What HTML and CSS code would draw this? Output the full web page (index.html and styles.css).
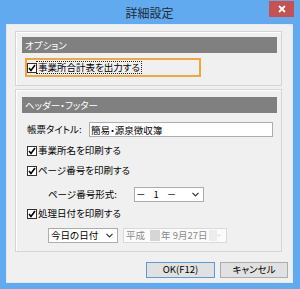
FILE: index.html
```html
<!DOCTYPE html>
<html lang="ja">

<head>
  <meta charset="utf-8">
  <title>詳細設定</title>
  <link rel="stylesheet" href="styles.css">
</head>

<body>
  <div class="window">
    <header class="titlebar">
      <span></span>
      <h1>詳細設定</h1>
      <button class="close" aria-label="閉じる">
        <svg width="8" height="8" viewBox="0 0 8 8"><path d="M1 1L7 7M7 1L1 7" stroke="#fff" stroke-width="1.8"/></svg>
      </button>
    </header>

    <main class="client">
      <section class="group group-options">
        <h2>オプション</h2>
        <div class="body">
          <label class="check focus-ring">
            <span class="box"><svg width="8" height="8" viewBox="0 0 8 8"><path d="M1 4L3 6.5L7 1" fill="none" stroke="#000" stroke-width="1.6"/></svg></span>
            <span class="text dotted">事業所合計表を出力する</span>
          </label>
        </div>
      </section>

      <section class="group group-header">
        <h2>ヘッダー・フッター</h2>
        <div class="body">
          <div class="row title-row">
            <label for="title">帳票タイトル:</label>
            <input id="title" type="text" value="簡易・源泉徴収簿">
          </div>
          <label class="check row-check">
            <span class="box"><svg width="8" height="8" viewBox="0 0 8 8"><path d="M1 4L3 6.5L7 1" fill="none" stroke="#000" stroke-width="1.6"/></svg></span>
            <span class="text">事業所名を印刷する</span>
          </label>
          <label class="check row-check">
            <span class="box"><svg width="8" height="8" viewBox="0 0 8 8"><path d="M1 4L3 6.5L7 1" fill="none" stroke="#000" stroke-width="1.6"/></svg></span>
            <span class="text">ページ番号を印刷する</span>
          </label>
          <div class="row indent page-row">
            <span class="page-label">ページ番号形式:</span>
            <div class="select page-select">
              <span class="value page-value"><span>－</span><span>1</span><span>－</span></span>
              <svg class="chev" width="7" height="5" viewBox="0 0 7 5"><path d="M0.5 0.8L3.5 3.8L6.5 0.8" fill="none" stroke="#333" stroke-width="1.2"/></svg>
            </div>
          </div>
          <label class="check row-check date-check">
            <span class="box"><svg width="8" height="8" viewBox="0 0 8 8"><path d="M1 4L3 6.5L7 1" fill="none" stroke="#000" stroke-width="1.6"/></svg></span>
            <span class="text">処理日付を印刷する</span>
          </label>
          <div class="row indent date-row">
            <div class="select day-select">
              <span class="value">今日の日付</span>
              <svg class="chev" width="7" height="5" viewBox="0 0 7 5"><path d="M0.5 0.8L3.5 3.8L6.5 0.8" fill="none" stroke="#333" stroke-width="1.2"/></svg>
            </div>
            <div class="select date-select disabled">
              <span class="value"><span>平成</span><span class="blank"></span><span>年 9月27日</span><span class="blank wide"></span></span>
              <svg class="chev" width="7" height="5" viewBox="0 0 7 5"><path d="M0.5 0.8L3.5 3.8L6.5 0.8" fill="none" stroke="#bbb" stroke-width="1.2"/></svg>
            </div>
          </div>
        </div>
      </section>

      <div class="actions">
        <button class="btn default">OK(F12)</button>
        <button class="btn">キャンセル</button>
      </div>
    </main>
  </div>
</body>

</html>
```

FILE: styles.css
```css
body {
  margin: 0;
  background: #62aaf0;
  font: 9.5px/1 "Noto Sans CJK JP", "Noto Sans", sans-serif;
  font-feature-settings: "palt";
  color: #000;
}

.window {
  width: 300px;
  height: 289px;
  box-sizing: border-box;
  padding: 0 7px 6px 6px;
  display: flex;
  flex-direction: column;
}

.titlebar {
  height: 24px;
  flex: none;
  display: grid;
  grid-template-columns: 1fr auto 1fr;
}

.titlebar h1 {
  margin: 0;
  font-size: 12px;
  font-weight: normal;
  line-height: 25px;
  color: #1f2a35;
}

.close {
  justify-self: end;
  margin: 1px -1px 0 0;
  width: 25px;
  height: 16px;
  padding: 0;
  border: 0;
  background: #c75050;
  display: grid;
  place-items: center;
}

.client {
  flex: 1;
  background: #f0f0f0;
  border: 1px solid #e2ebf4;
  padding: 6px 4px 4px 8px;
  display: flex;
  flex-direction: column;
}

.group {
  margin-right: 6px;
  border: 1px solid #d5d5d5;
  box-shadow: inset 1px 1px 0 #fff;
  padding: 5px 4px 8px 6px;
}

.group-header {
  margin-top: 3px;
  padding-top: 7px;
}

.group h2 {
  margin: 0;
  height: 16px;
  background: #808080;
  color: #fff;
  font-size: 9.5px;
  font-weight: normal;
  line-height: 16px;
  padding-left: 3px;
}

.group .body {
  display: flex;
  flex-direction: column;
  align-items: flex-start;
  padding-left: 5px;
}

.group-options .body {
  padding-left: 3px;
  margin-top: 5px;
}

.check {
  display: flex;
  align-items: center;
  gap: 1px;
  height: 14px;
}

.box {
  width: 10px;
  height: 10px;
  box-sizing: border-box;
  border: 1px solid #333;
  background: #fff;
  display: grid;
  place-items: center;
}

.focus-ring {
  box-sizing: border-box;
  width: 176px;
  height: 19px;
  border: 2px solid #f2a640;
}

.dotted {
  outline: 1px dotted #222;
  outline-offset: 1px;
}

.row {
  display: flex;
  align-items: center;
}

.title-row {
  margin-top: 9px;
}

.title-row label {
  width: 62px;
}

.title-row input {
  box-sizing: border-box;
  margin: 0;
  width: 184px;
  height: 15px;
  padding: 0 1px;
  border: 1px solid #abadb3;
  background: #fff;
  font: inherit;
}

.row-check {
  margin-top: 7px;
}

.row-check + .row-check {
  margin-top: 6px;
}

.indent {
  padding-left: 21px;
}

.page-row {
  margin-top: 9px;
}

.date-check {
  margin-top: 5px;
}

.date-row {
  margin-top: 7px;
  gap: 5px;
}

.page-label {
  width: 86px;
}

.select {
  box-sizing: border-box;
  height: 15px;
  border: 1px solid #acacac;
  background: #fff;
  display: flex;
  align-items: center;
  justify-content: space-between;
  padding: 0 4px 0 2px;
  white-space: nowrap;
}

.page-select {
  width: 70px;
  padding-left: 1px;
}

.page-value {
  display: flex;
  gap: 8px;
}

.day-select {
  width: 70px;
}

.date-select {
  width: 104px;
  padding-right: 5px;
}

.disabled {
  border-color: #d9d9d9;
  background: #fbfbfb;
  color: #8a8a8a;
}

.disabled .value {
  display: flex;
  align-items: center;
}

.blank {
  flex: none;
  width: 10px;
  height: 11px;
  margin: 0 1px 0 5px;
  background: #d6d6d6;
}

.blank.wide {
  width: 8px;
  margin: 0 0 0 2px;
  background: #ececec;
}

.actions {
  margin-top: 10px;
  display: flex;
  justify-content: flex-end;
  gap: 5px;
}

.btn {
  box-sizing: border-box;
  width: 68px;
  height: 16px;
  padding: 0;
  border: 1px solid #adadad;
  background: #e1e1e1;
  font: inherit;
  color: #000;
}

.btn.default {
  width: 69px;
  border-color: #5b9bd5;
}
```
